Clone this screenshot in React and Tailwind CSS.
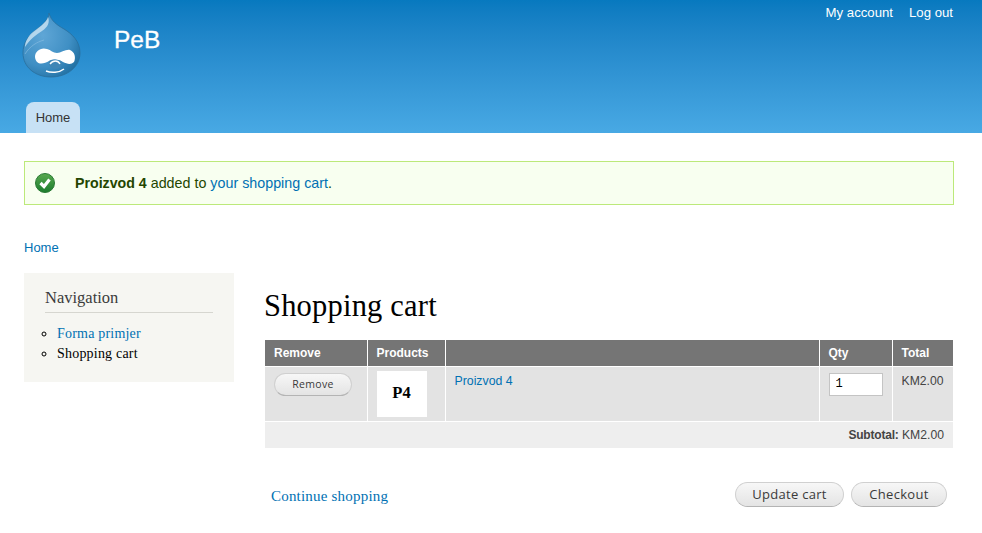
const HELV = '"Liberation Sans", Arial, sans-serif'

function DropLogo() {
  return (
    <svg width="60" height="68" viewBox="0 0 60 68" className="block">
      <defs>
        <radialGradient id="drop" cx="0.35" cy="0.35" r="0.8">
          <stop offset="0" stopColor="#5fa6d6" />
          <stop offset="0.6" stopColor="#3f8fc4" />
          <stop offset="1" stopColor="#1b6a9c" />
        </radialGradient>
      </defs>
      <path d="M27 1 C27 8 20 13 14 18 C6 24 1 31 1 41 C1 55 13 65 29 65 C45 65 58 55 58 41 C58 29 50 22 42 17 C35 13 29 9 27 1 Z" fill="url(#drop)" stroke="#2a6f9c" strokeWidth="0.8" />
      <path d="M26 5 C24 11 17 15 11 20 C6 24 3 30 3 35 C8 27 14 23 20 19 C26 15 28 10 26 5 Z" fill="#d4e9f7" opacity="0.75" />
      <path d="M3 42 C8 34 15 30 22 28" fill="none" stroke="#8cc0e2" strokeWidth="1" opacity="0.6" />
      <path d="M13 45 C13 39 19 35 25 37 C29 38 31 41 35 41 C39 41 44 37 48 38 C53 40 54 46 52 50 C49 53 45 52 41 50 C36 47 31 47 27 49 C22 52 14 54 13 45 Z" fill="#ffffff" />
      <path d="M27 49 C31 47 35 47 39 49 C41 52 40 56 34 57 C29 57 26 53 27 49 Z" fill="#3f86b6" />
      <path d="M28 52 C31 48 36 48 38 52" fill="none" stroke="#ffffff" strokeWidth="1.3" />
      <path d="M24 59 C29 61 37 61 42 57" fill="none" stroke="#ffffff" strokeWidth="1.5" />
    </svg>
  )
}

function CheckIcon() {
  return (
    <svg width="20" height="20" viewBox="0 0 20 20" className="block">
      <defs>
        <linearGradient id="ok" x1="0" y1="0" x2="0" y2="1">
          <stop offset="0" stopColor="#58a94f" />
          <stop offset="1" stopColor="#1c7c2e" />
        </linearGradient>
      </defs>
      <circle cx="10" cy="10" r="9.5" fill="url(#ok)" stroke="#2a7a35" strokeWidth="1" />
      <path d="M5.5 10 L9 13.5 L14.5 6.5" fill="none" stroke="#ffffff" strokeWidth="3.2" />
    </svg>
  )
}

function PillButton({ children, className }) {
  return (
    <button
      className={`rounded-[15px] border border-[#d0d0d0] border-b-[#b4b4b4] bg-gradient-to-b from-[#f7f7f7] to-[#e4e4e4] text-[#3a3a3a] ${className}`}
      style={{ fontFamily: '"Open Sans", sans-serif' }}
    >
      {children}
    </button>
  )
}

export default function App() {
  return (
    <div className="min-h-[533px] bg-white text-black" style={{ fontFamily: HELV }}>
      <header className="h-[133px] bg-gradient-to-b from-[#0779bf] to-[#48a9e4] pl-[22px] pr-[29px] flex flex-col">
        <div className="flex justify-between h-[102px]">
          <div className="flex items-start pt-[12px]">
            <DropLogo />
            <span className="ml-[32px] mt-[12px] text-[24.5px] leading-[32px] text-white [-webkit-text-stroke:0.3px_white]">PeB</span>
          </div>
          <div className="flex gap-[16px] pt-[5px] text-[13.2px] leading-[16px] text-white">
            <span>My account</span>
            <span>Log out</span>
          </div>
        </div>
        <nav className="ml-[4px] w-[54px] h-[31px] rounded-t-[8px] bg-[#c7e1f5] text-[13px] leading-[31px] text-center text-[#333]">
          Home
        </nav>
      </header>

      <div className="pl-[24px] pr-[28px] pt-[28px]">
        <div className="h-[44px] border border-[#bce97a] bg-[#f8fff0] flex items-center pl-[10px] text-[14.3px] text-[#234600]">
          <CheckIcon />
          <span className="ml-[20px] pt-[2px]">
            <b className="text-[14.2px]">Proizvod 4</b> added to <span className="text-[#0071b3]">your shopping cart</span>.
          </span>
        </div>

        <div className="mt-[35px] text-[13px] leading-[16px] text-[#0071b3]">Home</div>

        <div className="mt-[17px] flex">
          <aside className="w-[210px] h-[109px] bg-[#f6f6f2] px-[21px] pt-[15px]" style={{ fontFamily: '"Liberation Serif", serif' }}>
            <h2 className="text-[16.5px] leading-[20px] text-[#3b3b3b] pb-[4px] border-b border-[#d6d6d0]">Navigation</h2>
            <ul className="mt-[11px] text-[14px] leading-[20px] list-[circle] pl-[12px] marker:text-black">
              <li className="text-[#0071b3]"><span className="tracking-[0.2px]">Forma primjer</span></li>
              <li><span className="tracking-[0.2px]">Shopping cart</span></li>
            </ul>
          </aside>

          <main className="ml-[31px] w-[688px]">
            <h1 className="mt-[15px] -ml-[1px] text-[30.5px] leading-[36px] tracking-[0.2px]" style={{ fontFamily: '"Liberation Serif", serif' }}>Shopping cart</h1>

            <table className="mt-[16px] w-full border-collapse text-[12px] table-fixed">
              <thead>
                <tr className="h-[26px] bg-[#757575] text-white text-left font-bold">
                  <th className="w-[102px] pl-[9px] border-r border-white">Remove</th>
                  <th className="w-[78px] pl-[9px] border-r border-white">Products</th>
                  <th className="border-r border-white" />
                  <th className="w-[73px] pl-[9px] border-r border-white">Qty</th>
                  <th className="w-[61px] pl-[9px]">Total</th>
                </tr>
              </thead>
              <tbody>
                <tr className="h-[55px] bg-[#e3e3e3] border-t border-white align-top text-[#444]">
                  <td className="pl-[9px] pt-[6px] border-r border-white">
                    <PillButton className="block w-[78px] h-[23px] text-[10.5px] tracking-[0.3px] leading-[20px]">Remove</PillButton>
                  </td>
                  <td className="pl-[9px] pt-[4px] border-r border-white">
                    <div className="w-[50px] h-[46px] bg-white flex items-center justify-center text-[16.5px] font-bold text-black" style={{ fontFamily: '"Liberation Serif", serif' }}>P4</div>
                  </td>
                  <td className="pl-[9px] pt-[5px] border-r border-white text-[12.3px] text-[#0071b3]">Proizvod 4</td>
                  <td className="pl-[9px] pt-[6px] border-r border-white">
                    <input
                      readOnly
                      value="1"
                      className="block w-[54px] h-[23px] bg-white border border-[#c4c4c4] pl-[6px] text-[12px] text-black"
                      style={{ fontFamily: '"Liberation Mono", monospace' }}
                    />
                  </td>
                  <td className="pl-[9px] pt-[5px] text-[12.2px]">KM2.00</td>
                </tr>
                <tr className="h-[27px] bg-[#eeeeee] border-t border-white text-[12.2px] text-[#444]">
                  <td colSpan={5} className="text-right pr-[9px]"><b className="text-[12px] tracking-[-0.2px]">Subtotal:</b> KM2.00</td>
                </tr>
              </tbody>
            </table>

            <div className="mt-[34px] flex items-center justify-between pl-[6px] pr-[6px]">
              <span className="mt-[3px] text-[15px] tracking-[0.2px] text-[#0071b3]" style={{ fontFamily: '"Liberation Serif", serif' }}>Continue shopping</span>
              <div className="flex gap-[7px]">
                <PillButton className="w-[109px] h-[25px] text-[13px] tracking-[0.3px] leading-[23px]">Update cart</PillButton>
                <PillButton className="w-[96px] h-[25px] text-[13px] tracking-[0.3px] leading-[23px]">Checkout</PillButton>
              </div>
            </div>
          </main>
        </div>
      </div>
    </div>
  )
}
